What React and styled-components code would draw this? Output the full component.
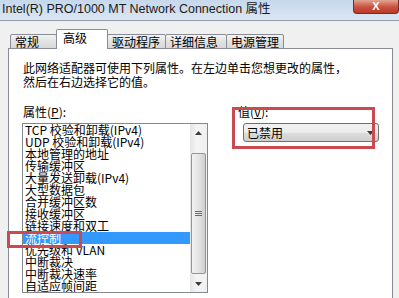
import React from 'react';
import styled, { createGlobalStyle } from 'styled-components';

//----Styled Components----//
const GlobalStyle = createGlobalStyle`
  html, body {
    margin: 0;
    padding: 0;
  }
  body {
    width: 399px;
    height: 298px;
    overflow: hidden;
    background: #f0f0f0;
    font-family: "Noto Sans CJK SC", sans-serif;
    color: #000;
  }
`;

const Window = styled.div`
  width: 399px;
  height: 298px;
  overflow: hidden;
  display: flex;
  flex-direction: column;
  background: #f0f0f0;
`;

const TitleBar = styled.div`
  height: 20px;
  flex: none;
  display: flex;
  align-items: flex-start;
  justify-content: space-between;
  background: linear-gradient(to bottom, #c6d8ec, #dbe6f2);
  border-bottom: 1px solid #8e9bab;
  padding-left: 2px;
`;

const Title = styled.span`
  font-family: "Liberation Sans", "Noto Sans CJK SC", sans-serif;
  font-size: 12.5px;
  line-height: 19px;
  color: #1b1b1b;
  white-space: nowrap;
`;

const CloseButton = styled.div`
  width: 44px;
  height: 13px;
  border: 1px solid #7a2a20;
  border-top: none;
  border-radius: 0 0 4px 4px;
  background: linear-gradient(to bottom, #e3a391, #c9503d 55%, #b93a27);
  display: flex;
  align-items: center;
  justify-content: center;
  color: #fff;
  font-family: "Liberation Sans", sans-serif;
  font-weight: bold;
  font-size: 11px;
  line-height: 11px;
`;

const Body = styled.div`
  flex: 1;
  display: flex;
  flex-direction: column;
  padding: 8px 6px 0 8px;
  min-height: 0;
`;

const TabStrip = styled.div`
  display: flex;
  align-items: flex-end;
  height: 20px;
  padding-left: 2px;
  margin-bottom: -1px;
  position: relative;
  z-index: 1;
`;

const Tab = styled.div`
  box-sizing: border-box;
  width: ${(p) => p.w}px;
  height: ${(p) => (p.active ? 20 : 15)}px;
  margin-left: -1px;
  &:first-child {
    margin-left: 0;
  }
  border: 1px solid #898c95;
  border-bottom: ${(p) => (p.active ? 'none' : '1px solid #898c95')};
  border-radius: 2px 2px 0 0;
  background: ${(p) =>
    p.active ? '#fff' : 'linear-gradient(to bottom, #f4f4f4, #e2e2e2 50%, #d8d8d8)'};
  position: relative;
  z-index: ${(p) => (p.active ? 2 : 1)};
  font-size: 12px;
  line-height: ${(p) => (p.active ? 16 : 14)}px;
  padding-left: ${(p) => (p.active ? 6 : 4)}px;
  white-space: nowrap;
`;

const Panel = styled.div`
  flex: 1;
  background: #fff;
  border: 1px solid #898c95;
  border-bottom: none;
  padding: 12px 14px 0 14px;
`;

const Description = styled.p`
  margin: 0;
  font-size: 12px;
  line-height: 14px;
  white-space: nowrap;
`;

const Columns = styled.div`
  display: grid;
  grid-template-columns: 186px 1fr;
  column-gap: 30px;
  margin-top: 16px;
  margin-left: -1px;
`;

const Column = styled.div`
  position: relative;
  display: flex;
  flex-direction: column;
`;

const FieldLabel = styled.div`
  font-size: 12px;
  line-height: 14px;
  margin-bottom: 4px;
  padding-left: ${(p) => p.indent || 0}px;
  u {
    text-decoration: underline;
  }
`;

const ListBox = styled.div`
  box-sizing: border-box;
  height: 170px;
  border: 1px solid #828790;
  background: #fff;
  display: flex;
`;

const Items = styled.ul`
  flex: 1;
  margin: 0;
  padding: 0;
  list-style: none;
`;

const Item = styled.li`
  height: 12px;
  font-size: 12px;
  line-height: 12px;
  padding-left: 2px;
  white-space: nowrap;
  background: ${(p) => (p.selected ? '#3399ff' : 'transparent')};
  color: ${(p) => (p.selected ? '#fff' : '#000')};
`;

const ScrollBar = styled.div`
  width: 17px;
  display: flex;
  flex-direction: column;
  background: linear-gradient(to right, #e6e6e6, #f4f4f4 40%, #f0f0f0);
`;

const ArrowButton = styled.div`
  height: 17px;
  display: flex;
  align-items: center;
  justify-content: center;
  flex: none;
`;

const Track = styled.div`
  flex: 1;
  display: flex;
  flex-direction: column;
  align-items: center;
`;

const Thumb = styled.div`
  box-sizing: border-box;
  width: 15px;
  height: 121px;
  margin-top: 12px;
  border: 1px solid #959595;
  border-radius: 2px;
  background: linear-gradient(to right, #f2f2f2, #e4e4e4 50%, #cfcfcf);
  display: flex;
  align-items: center;
  justify-content: center;
`;

const ComboBox = styled.div`
  box-sizing: border-box;
  width: 136px;
  height: 19px;
  margin-left: 5px;
  border: 1px solid #707070;
  border-radius: 3px;
  background: linear-gradient(to bottom, #f2f2f2, #ebebeb 50%, #dddddd 51%, #cfcfcf);
  display: flex;
  align-items: center;
  justify-content: space-between;
  padding: 0 4px 0 3px;
  font-size: 12px;
  line-height: 17px;
`;

const Highlight = styled.div`
  position: absolute;
  left: ${(p) => p.x}px;
  top: ${(p) => p.y}px;
  width: ${(p) => p.w}px;
  height: ${(p) => p.h}px;
  box-sizing: border-box;
  border: 3px solid #c94a50;
  pointer-events: none;
`;
//----End of Styled Components----//

const tabs = [
  { label: '常规', w: 47 },
  { label: '高级', w: 52, active: true },
  { label: '驱动程序', w: 59 },
  { label: '详细信息', w: 62 },
  { label: '电源管理', w: 58 },
];

const properties = [
  'TCP 校验和卸载(IPv4)',
  'UDP 校验和卸载(IPv4)',
  '本地管理的地址',
  '传输缓冲区',
  '大量发送卸载(IPv4)',
  '大型数据包',
  '合并缓冲区数',
  '接收缓冲区',
  '链接速度和双工',
  '流控制',
  '优先级和 VLAN',
  '中断裁决',
  '中断裁决速率',
  '自适应帧间距',
];

const Triangle = ({ up }) => (
  <svg width="7" height="4" viewBox="0 0 7 4">
    <path d={up ? 'M0 4 L3.5 0 L7 4 Z' : 'M0 0 L7 0 L3.5 4 Z'} fill="#3c3c3c" />
  </svg>
);

const Grip = () => (
  <svg width="7" height="7" viewBox="0 0 7 7">
    <path d="M0 1.5 H7 M0 3.5 H7 M0 5.5 H7" stroke="#6a6a6a" strokeWidth="1" />
  </svg>
);

export default function App() {
  return (
    <Window>
      <GlobalStyle />
      <TitleBar>
        <Title>Intel(R) PRO/1000 MT Network Connection 属性</Title>
        <CloseButton>X</CloseButton>
      </TitleBar>
      <Body>
        <TabStrip>
          {tabs.map((t) => (
            <Tab key={t.label} w={t.w} active={t.active}>
              {t.label}
            </Tab>
          ))}
        </TabStrip>
        <Panel>
          <Description>
            此网络适配器可使用下列属性。在左边单击您想更改的属性，
            <br />
            然后在右边选择它的值。
          </Description>
          <Columns>
            <Column>
              <FieldLabel indent={1}>
                属性(<u>P</u>):
              </FieldLabel>
              <ListBox>
                <Items>
                  {properties.map((p) => (
                    <Item key={p} selected={p === '流控制'}>
                      {p}
                    </Item>
                  ))}
                </Items>
                <ScrollBar>
                  <ArrowButton>
                    <Triangle up />
                  </ArrowButton>
                  <Track>
                    <Thumb>
                      <Grip />
                    </Thumb>
                  </Track>
                  <ArrowButton>
                    <Triangle />
                  </ArrowButton>
                </ScrollBar>
              </ListBox>
              <Highlight x={-15} y={126} w={75} h={17} />
            </Column>
            <Column>
              <FieldLabel>
                值(<u>V</u>):
              </FieldLabel>
              <ComboBox>
                <span>已禁用</span>
                <Triangle />
              </ComboBox>
              <Highlight x={-6} y={2} w={143} h={42} />
            </Column>
          </Columns>
        </Panel>
      </Body>
    </Window>
  );
}
